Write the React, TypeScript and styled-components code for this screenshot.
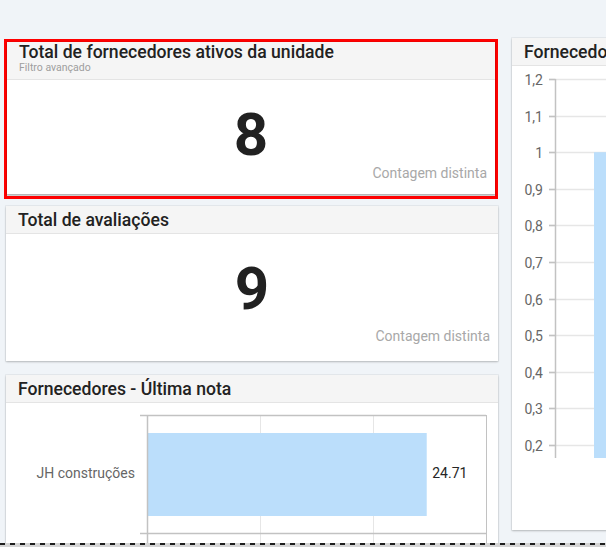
import styled, { createGlobalStyle } from 'styled-components';

const GlobalStyle = createGlobalStyle`
    html, body {
        margin: 0;
        padding: 0;
        overflow: hidden;
    }
    body {
        background: #d4d4d4;
        font-family: Roboto, 'Noto Sans', sans-serif;
    }
`;

const Page = styled.div`
    width: 606px;
    height: 547px;
    overflow: hidden;
`;

const Board = styled.div`
    height: 543px;
    box-sizing: border-box;
    background: #f0f4f8;
    overflow: hidden;
    padding: 38px 0 0 4px;
    display: grid;
    grid-template-columns: 494px 320px;
    column-gap: 14px;
    align-items: start;
`;

const DashedRule = styled.div`
    height: 2px;
    background: repeating-linear-gradient(to right, #1e1e1e 0 5px, transparent 5px 10px);
`;

const Column = styled.div`
    display: flex;
    flex-direction: column;
`;

/* red frame around the selected widget */
const SelectionFrame = styled.div`
    margin-top: 1px;
    height: 160px;
    box-sizing: border-box;
    border: 3px solid #ff0000;
    background: #dedede;
`;

const Card = styled.div<{ $height: number; $top?: number; $left?: number }>`
    height: ${(p) => p.$height}px;
    margin-top: ${(p) => p.$top ?? 0}px;
    margin-left: ${(p) => p.$left ?? 0}px;
    background: #fff;
    box-shadow: 0 1px 2px rgba(0, 0, 0, 0.22), 0 0 0 1px rgba(0, 0, 0, 0.04);
    display: flex;
    flex-direction: column;
    overflow: hidden;
`;

const Header = styled.div<{ $sub?: boolean }>`
    flex: none;
    box-sizing: border-box;
    height: ${(p) => (p.$sub ? 38 : 28)}px;
    padding: ${(p) => (p.$sub ? '0 12px' : '4px 12px 0')};
    background: #f5f5f5;
    border-bottom: 1px solid #e4e4e4;
`;

const Title = styled.div`
    font-size: 17.6px;
    font-weight: 500;
    line-height: 20px;
    color: #222;
    white-space: nowrap;
`;

const Subtitle = styled.div`
    font-size: 10.5px;
    line-height: 12px;
    color: #9e9e9e;
`;

const KpiBody = styled.div`
    flex: 1;
    display: flex;
    flex-direction: column;
    align-items: center;
    padding: 25px 8px 17px;
`;

const BigNumber = styled.div`
    font-size: 60px;
    font-weight: 700;
    line-height: 60px;
    color: #212121;
`;

const Caption = styled.div`
    margin-top: auto;
    align-self: flex-end;
    font-size: 14px;
    line-height: 16px;
    color: #a8a8a8;
`;

const ChartBody = styled.div`
    flex: 1;
    overflow: hidden;
`;

const AxisText = styled.text<{ $dark?: boolean }>`
    font-family: Roboto, 'Noto Sans', sans-serif;
    font-size: 14px;
    fill: ${(p) => (p.$dark ? '#262626' : '#666')};
`;

const BAR = '#bbdefb';
const AXIS = '#c2c2c2';
const GRID = '#e6e6e6';

const lastScores = [{ name: 'JH construções', value: 24.71 }];

const HorizontalBars = () => {
    const left = 141;
    const right = 480;
    const max = 30;
    const scale = (right - left) / max;
    return (
        <svg width="492" height="150">
            {[10, 20, 30].map((v) => (
                <line key={v} x1={left + v * scale + 0.5} x2={left + v * scale + 0.5} y1={12} y2={150} stroke={GRID} />
            ))}
            <line x1={134} x2={right} y1={12.5} y2={12.5} stroke={AXIS} strokeWidth={1.5} />
            <line x1={134} x2={right} y1={130.5} y2={130.5} stroke={AXIS} strokeWidth={1.5} />
            <line x1={right + 0.5} x2={right + 0.5} y1={12} y2={150} stroke={AXIS} />
            {lastScores.map((d) => (
                <g key={d.name}>
                    <rect x={left + 0.5} y={30} width={d.value * scale} height={83} fill={BAR} />
                    <AxisText x={129} y={75} textAnchor="end">
                        {d.name}
                    </AxisText>
                    <AxisText $dark x={left + d.value * scale + 6} y={75}>
                        {d.value}
                    </AxisText>
                </g>
            ))}
            <line x1={left + 0.5} x2={left + 0.5} y1={12} y2={150} stroke={AXIS} strokeWidth={1.5} />
        </svg>
    );
};

const ticks = [1.2, 1.1, 1, 0.9, 0.8, 0.7, 0.6, 0.5, 0.4, 0.3, 0.2];

const VerticalBars = () => {
    const axisX = 43.5;
    const step = 36.6;
    const yOf = (v: number) => 13 + ((1.2 - v) / 0.1) * step;
    const bottom = 392;
    return (
        <svg width="320" height="420">
            {ticks.map((t) => {
                const y = Math.round(yOf(t)) + 0.5;
                return (
                    <g key={t}>
                        <line x1={37} x2={320} y1={y} y2={y} stroke={GRID} strokeWidth={1.5} />
                        <line x1={37} x2={axisX} y1={y} y2={y} stroke={AXIS} strokeWidth={1.5} />
                        <AxisText x={31} y={y + 5} textAnchor="end">
                            {String(t).replace('.', ',')}
                        </AxisText>
                    </g>
                );
            })}
            <rect x={82} y={yOf(1)} width={80} height={bottom - yOf(1)} fill={BAR} />
            <line x1={axisX} x2={axisX} y1={13} y2={bottom} stroke={AXIS} strokeWidth={1.5} />
        </svg>
    );
};

const App = () => {
    return (
        <Page>
            <GlobalStyle />
            <Board>
                <Column>
                    <SelectionFrame>
                        <Card $height={152}>
                            <Header $sub>
                                <Title>Total de fornecedores ativos da unidade</Title>
                                <Subtitle>Filtro avançado</Subtitle>
                            </Header>
                            <KpiBody>
                                <BigNumber>8</BigNumber>
                                <Caption>Contagem distinta</Caption>
                            </KpiBody>
                        </Card>
                    </SelectionFrame>

                    <Card $height={155} $top={7} $left={2}>
                        <Header>
                            <Title>Total de avaliações</Title>
                        </Header>
                        <KpiBody>
                            <BigNumber>9</BigNumber>
                            <Caption>Contagem distinta</Caption>
                        </KpiBody>
                    </Card>

                    <Card $height={300} $top={14} $left={2}>
                        <Header>
                            <Title>Fornecedores - Última nota</Title>
                        </Header>
                        <ChartBody>
                            <HorizontalBars />
                        </ChartBody>
                    </Card>
                </Column>

                <Card $height={492}>
                    <Header>
                        <Title>Fornecedores avaliados</Title>
                    </Header>
                    <ChartBody>
                        <VerticalBars />
                    </ChartBody>
                </Card>
            </Board>
            <DashedRule />
        </Page>
    );
};

export default App;
